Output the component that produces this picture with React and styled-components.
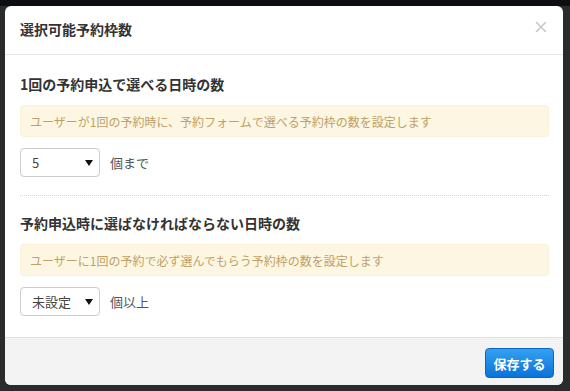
import React from 'react';
import styled, { createGlobalStyle } from 'styled-components';

const GlobalStyle = createGlobalStyle`
  html, body {
    margin: 0;
    padding: 0;
    background: #1d1f22;
  }
  body {
    font-family: "Noto Sans CJK JP", "Noto Sans", sans-serif;
  }
`;

const Page = styled.div`
  width: 570px;
  height: 391px;
  padding: 6px 7px 6px 5px;
  box-sizing: border-box;
  background: linear-gradient(#0c0e11 0 6px, #2a2b2d 6px);
`;

const Modal = styled.div`
  height: 379px;
  background: #fff;
  border-radius: 6px;
  display: flex;
  flex-direction: column;
  overflow: hidden;
`;

const Header = styled.div`
  height: 48px;
  border-bottom: 1px solid #e5e5e5;
  display: flex;
  align-items: center;
  justify-content: space-between;
  padding: 0 16px 0 15px;
`;

const Title = styled.h4`
  margin: 0;
  font-size: 14px;
  font-weight: bold;
  color: #333;
  line-height: 20px;
  padding-bottom: 3px;
`;

const Close = styled.button`
  border: 0;
  background: none;
  padding: 0;
  width: 12px;
  height: 12px;
  display: flex;
  margin-top: -7px;
`;

const Body = styled.div`
  flex: 1;
  padding: 19px 14px 0 15px;
`;

const Heading = styled.h5`
  margin: 0 0 11px;
  font-size: 14px;
  font-weight: bold;
  color: #333;
  line-height: 20px;
`;

const Alert = styled.div`
  height: 32px;
  box-sizing: border-box;
  background: #fcf6e2;
  border: 1px solid #fbf0d8;
  border-radius: 4px;
  color: #c19f66;
  font-size: 12px;
  padding: 0 9px;
  display: flex;
  align-items: center;
`;

const Row = styled.div`
  margin-top: 11px;
  display: flex;
  align-items: center;
  gap: 10px;
`;

const Select = styled.div`
  width: 80px;
  height: 29px;
  box-sizing: border-box;
  border: 1px solid #ccc;
  border-radius: 4px;
  display: flex;
  align-items: center;
  justify-content: space-between;
  padding: 0 6px 0 11px;
  font-size: 13px;
  color: #444;
`;

const Unit = styled.span`
  font-size: 13px;
  color: #555;
`;

const Divider = styled.hr`
  margin: 18px 0 17px;
  border: 0;
  border-top: 1px dotted #d6d6d6;
`;

const Footer = styled.div`
  height: 48px;
  box-sizing: border-box;
  border-top: 1px solid #e0e0e0;
  background: #f3f3f3;
  display: flex;
  justify-content: flex-end;
  padding: 10px 9px 0 0;
`;

const SaveButton = styled.button`
  width: 69px;
  height: 30px;
  border: 1px solid #0b66c2;
  border-radius: 4px;
  background: linear-gradient(#33a1f2, #0a73d9);
  color: #fff;
  font-family: inherit;
  font-size: 13px;
  font-weight: bold;
  padding: 0;
`;

const Arrow = () => (
  <svg width="8" height="6" viewBox="0 0 8 6">
    <path d="M0 0 H8 L4 6 Z" fill="#111" />
  </svg>
);

const Section = ({ heading, note, value, unit }) => (
  <>
    <Heading>{heading}</Heading>
    <Alert>{note}</Alert>
    <Row>
      <Select>
        <span>{value}</span>
        <Arrow />
      </Select>
      <Unit>{unit}</Unit>
    </Row>
  </>
);

const App = () => (
  <Page>
    <GlobalStyle />
    <Modal>
      <Header>
        <Title>選択可能予約枠数</Title>
        <Close aria-label="close">
          <svg width="12" height="12" viewBox="0 0 12 12">
            <path d="M1 1 L11 11 M11 1 L1 11" stroke="#c9c9c9" strokeWidth="1.6" />
          </svg>
        </Close>
      </Header>
      <Body>
        <Section
          heading="1回の予約申込で選べる日時の数"
          note="ユーザーが1回の予約時に、予約フォームで選べる予約枠の数を設定します"
          value="5"
          unit="個まで"
        />
        <Divider />
        <Section
          heading="予約申込時に選ばなければならない日時の数"
          note="ユーザーに1回の予約で必ず選んでもらう予約枠の数を設定します"
          value="未設定"
          unit="個以上"
        />
      </Body>
      <Footer>
        <SaveButton>保存する</SaveButton>
      </Footer>
    </Modal>
  </Page>
);

export default App;
